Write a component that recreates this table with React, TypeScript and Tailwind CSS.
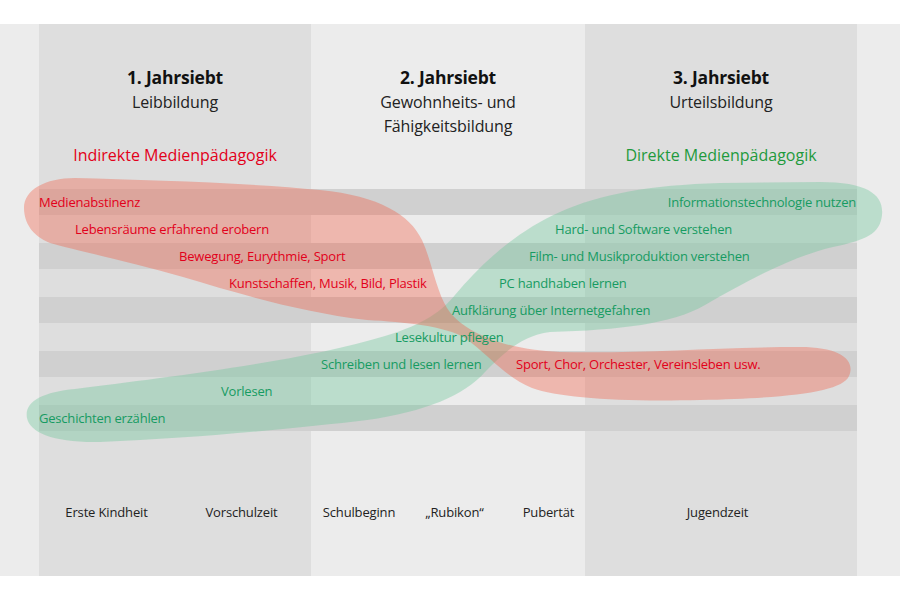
import React from "react";

type Entry = {
  text: string;
  color: string;
  place: string;
};

const RED = "text-[#e2001a]";
const GREEN = "text-[#169b62]";

// each row is 27px high, items are placed by their left edge in the picture
const rows: Entry[][] = [
  [
    { text: "Medienabstinenz", color: RED, place: "ml-[39px]" },
    { text: "Informationstechnologie nutzen", color: GREEN, place: "ml-auto mr-[44px]" },
  ],
  [
    { text: "Lebensräume erfahrend erobern", color: RED, place: "ml-[75px] w-[480px]" },
    { text: "Hard- und Software verstehen", color: GREEN, place: "" },
  ],
  [
    { text: "Bewegung, Eurythmie, Sport", color: RED, place: "ml-[179px] w-[350px]" },
    { text: "Film- und Musikproduktion verstehen", color: GREEN, place: "" },
  ],
  [
    { text: "Kunstschaffen, Musik, Bild, Plastik", color: RED, place: "ml-[229px] w-[270px]" },
    { text: "PC handhaben lernen", color: GREEN, place: "" },
  ],
  [{ text: "Aufklärung über Internetgefahren", color: GREEN, place: "ml-[452px]" }],
  [{ text: "Lesekultur pflegen", color: GREEN, place: "ml-[395px]" }],
  [
    { text: "Schreiben und lesen lernen", color: GREEN, place: "ml-[321px] w-[195px]" },
    { text: "Sport, Chor, Orchester, Vereinsleben usw.", color: RED, place: "" },
  ],
  [{ text: "Vorlesen", color: GREEN, place: "ml-[221px]" }],
  [{ text: "Geschichten erzählen", color: GREEN, place: "ml-[39px]" }],
];

const ages = [
  { label: "Erste Kindheit", width: "w-[135px]" },
  { label: "Vorschulzeit", width: "w-[135px]" },
  { label: "Schulbeginn", width: "w-[100px]" },
  { label: "\u201eRubikon\u201c", width: "w-[91px]" },
  { label: "Pubertät", width: "w-[97px]" },
  { label: "Jugendzeit", width: "w-[241px]" },
];

const RED_BLOB =
  "M 24 208 C 24 190, 45 178, 75 178 C 150 180, 250 183, 320 190 C 380 196, 410 215, 422 240 " +
  "C 432 262, 436 290, 447 308 C 462 332, 505 350, 560 352 C 640 354, 720 347, 800 347 " +
  "C 840 347, 856 360, 849 376 C 842 392, 790 398, 700 400 C 620 402, 560 398, 532 388 " +
  "C 506 378, 490 356, 465 338 C 445 326, 405 322, 367 320 C 300 312, 240 294, 183 277 " +
  "C 130 262, 75 250, 50 243 C 32 236, 24 222, 24 208 Z";

const GREEN_BLOB =
  "M 27 418 C 24 402, 42 392, 75 389 C 160 378, 300 362, 385 336 C 425 324, 443 310, 455 295 " +
  "C 480 265, 515 232, 560 212 C 600 194, 650 185, 720 183 L 820 182 C 868 182, 884 195, 882 215 " +
  "C 880 234, 866 240, 833 247 C 790 257, 745 282, 705 305 C 672 324, 620 330, 550 332 " +
  "C 520 336, 502 355, 485 372 C 465 395, 425 412, 367 420 C 300 428, 200 438, 100 442 " +
  "C 55 443, 30 433, 27 418 Z";

const Phase = ({
  title,
  lines,
  media,
  mediaColor,
}: {
  title: string;
  lines: string[];
  media?: string;
  mediaColor?: string;
}) => (
  <div className="flex flex-col items-center text-center">
    <div className="h-[25px] text-[17.5px] leading-[25px] font-bold text-[#111] tracking-[-0.2px]">{title}</div>
    <div className="h-[53px] text-[16px] leading-[24px] text-[#222] tracking-[-0.1px]">
      {lines.map((l) => (
        <div key={l}>{l}</div>
      ))}
    </div>
    <div className={`h-[25px] text-[16px] leading-[25px] ${mediaColor ?? ""}`}>{media}</div>
  </div>
);

export default function App() {
  return (
    <div className="w-[900px] h-[600px] bg-white pt-[24px] font-['Open_Sans',sans-serif]">
      <div className="grid h-[552px] bg-[#ececec]">
        {/* column backgrounds */}
        <div className="col-start-1 row-start-1 flex">
          <div className="w-[39px]" />
          <div className="w-[272px] bg-[#dedede]" />
          <div className="w-[274px]" />
          <div className="w-[272px] bg-[#dedede]" />
        </div>

        <div className="col-start-1 row-start-1 flex flex-col">
          <div className="h-[165px] pt-[41px] pl-[39px] grid grid-cols-[272px_274px_272px]">
            <Phase
              title="1. Jahrsiebt"
              lines={["Leibbildung"]}
              media="Indirekte Medienpädagogik"
              mediaColor="text-[#e2001a]"
            />
            <Phase title="2. Jahrsiebt" lines={["Gewohnheits- und", "Fähigkeitsbildung"]} />
            <Phase
              title="3. Jahrsiebt"
              lines={["Urteilsbildung"]}
              media="Direkte Medienpädagogik"
              mediaColor="text-[#1e9a3c]"
            />
          </div>

          <div className="grid">
            <div className="col-start-1 row-start-1 flex flex-col">
              {rows.map((_, i) => (
                <div key={i} className="h-[27px]">
                  {i % 2 === 0 && <div className="ml-[39px] w-[818px] h-[26px] bg-[#d0d0d0]" />}
                </div>
              ))}
            </div>

            <svg
              className="col-start-1 row-start-1 w-[900px] h-[243px] overflow-visible pointer-events-none"
              viewBox="0 189 900 243"
            >
              <path d={GREEN_BLOB} fill="rgb(108,197,153)" fillOpacity={0.38} />
              <path d={RED_BLOB} fill="rgb(242,89,64)" fillOpacity={0.36} />
            </svg>

            <div className="col-start-1 row-start-1 flex flex-col text-[13px] tracking-[-0.2px]">
              {rows.map((row, i) => (
                <div key={i} className="flex h-[27px] leading-[27px]">
                  {row.map((e) => (
                    <span key={e.text} className={`${e.place} ${e.color} whitespace-nowrap`}>
                      {e.text}
                    </span>
                  ))}
                </div>
              ))}
            </div>
          </div>

          <div className="mt-[70px] pl-[39px] flex text-[13px] leading-[20px] text-[#222] tracking-[-0.15px]">
            {ages.map((a) => (
              <div key={a.label} className={`${a.width} text-center whitespace-nowrap`}>
                {a.label}
              </div>
            ))}
          </div>
        </div>
      </div>
    </div>
  );
}
